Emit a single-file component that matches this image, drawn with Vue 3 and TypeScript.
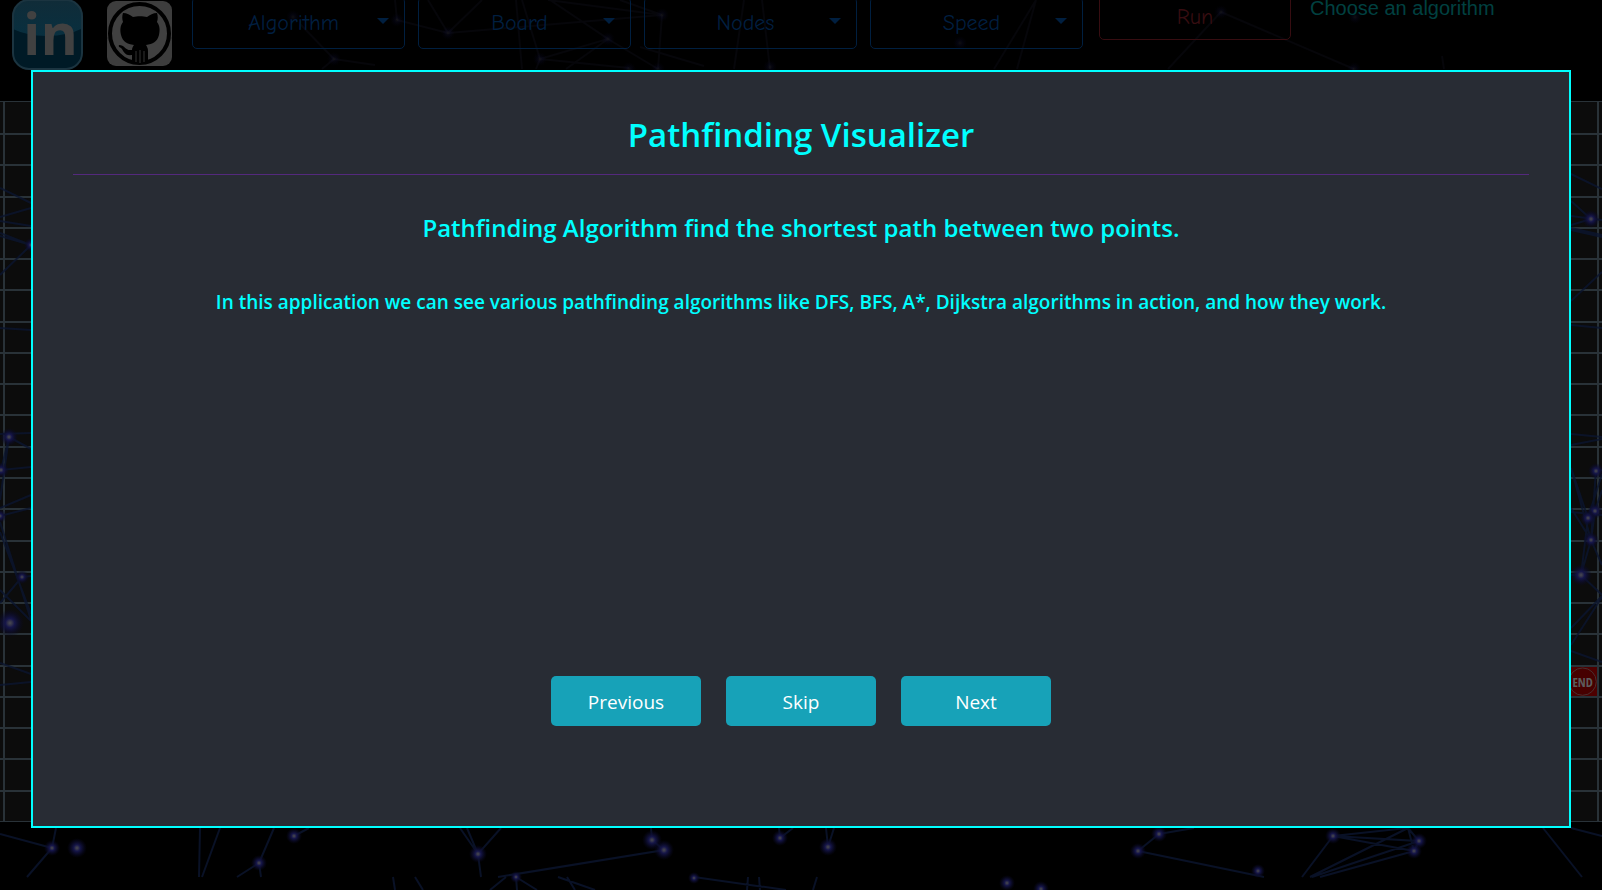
<script setup lang="ts">
interface Star {
  x: number
  y: number
  r: number
}

const menus: string[] = ['Algorithm', 'Board', 'Nodes', 'Speed']
const steps: string[] = ['Previous', 'Skip', 'Next']

const rows = 23
const columns = 53
const endCell = 18 * columns + 51
const cells: number[] = Array.from({ length: rows * columns }, (_, i) => i)

const faintStars: Star[] = [
  [293, 17], [397, 20], [334, 59], [448, 33], [608, 39], [540, 59], [662, 15],
  [770, 67], [629, 69], [658, 69], [960, 43], [1221, 12], [1354, 69], [1355, 17],
].map(([x, y]) => ({ x, y, r: 7 }))

const stars: Star[] = [
  [52, 848, 8], [77, 848, 10], [259, 863, 8], [294, 836, 8], [478, 854, 9],
  [652, 840, 10], [664, 850, 10], [780, 838, 8], [828, 847, 9], [1138, 851, 8],
  [1159, 834, 8], [1258, 871, 7], [1333, 836, 8], [1419, 841, 8], [1414, 851, 8],
  [1007, 883, 8], [1041, 889, 8], [694, 878, 6], [516, 877, 6],
  [9, 437, 9], [1, 470, 8], [0, 516, 7], [22, 577, 7], [10, 623, 14], [31, 245, 7],
  [1591, 219, 9], [1596, 471, 8], [1595, 511, 8], [1588, 518, 8], [1591, 540, 8], [1581, 575, 11],
].map(([x, y, r]) => ({ x, y, r }))

const faintLines =
  'M300 24L334 59L375 65M334 59L322 69M397 20L448 33L662 15L548 0M448 33L482 0M448 33L428 0' +
  'M397 20L395 0M516 0L522 69M522 0L540 59L608 39L550 0M540 59L536 69M540 59L629 68' +
  'M608 39L566 69M608 39L658 69M640 47L704 66M662 15L658 69M662 15L620 0M744 0L734 69' +
  'M762 0L770 69M1036 0L994 69M1036 0L1017 69M1221 12L1168 69M1221 12L1354 69M1442 56L1444 69'

const lines =
  'M0 834L52 848L56 828M52 848L27 877M200 828L199 877M220 828L202 877M274 828L259 863L237 877' +
  'M259 863L261 877M294 836L309 828M460 828L478 854L501 828M467 828L478 854L481 877' +
  'M651 828L652 840L664 850L498 877M779 828L780 838L793 828M826 828L828 847L834 828' +
  'M1138 851L1159 834L1194 828M1138 851L1264 877M1333 836L1302 877M1333 836L1407 828' +
  'M1333 836L1419 841L1408 828M1333 836L1414 851L1320 877M1419 841L1414 851L1408 828' +
  'M1408 828L1310 877M1419 841L1312 877M1543 828L1582 877M1571 828L1602 836' +
  'M393 877L395 890M415 877L423 890M506 877L490 890M516 877L537 890M516 877L517 890' +
  'M558 877L595 890M567 877L575 890M694 877L786 890M748 877L747 890M759 877L760 890M817 877L813 890'

const sideLines =
  'M0 188L31 203M0 217L31 208M0 221L31 226M0 233L31 245L0 275M0 236L31 245M0 328L31 330' +
  'M0 434L31 433M9 437L31 449M9 437L1 470L31 467M9 437L0 500M0 508L31 495M0 516L31 508' +
  'M0 522L31 620M0 532L31 614M0 590L31 621M0 603L22 577L31 576M0 663L31 674M0 685L31 682' +
  'M1571 174L1602 189M1571 201L1591 219L1571 225M1571 216L1602 220M1571 230L1602 237' +
  'M1571 228L1602 235M1571 301L1602 272M1571 325L1602 328M1571 434L1602 437M1571 445L1602 439' +
  'M1596 471L1602 470M1571 468L1591 540L1602 565M1571 508L1591 540L1596 470' +
  'M1571 512L1602 515M1588 518L1602 474M1588 518L1571 468M1588 518L1595 511L1602 490' +
  'M1591 540L1595 511M1591 540L1581 575L1602 595M1581 575L1588 518M1581 575L1571 575' +
  'M1571 628L1602 596M1571 645L1602 597M1571 651L1602 662'
</script>

<template>
  <div class="page">
    <svg class="sky" viewBox="0 0 1602 890" preserveAspectRatio="xMidYMin slice" aria-hidden="true">
      <defs>
        <radialGradient id="glow">
          <stop offset="0" stop-color="#4a4a50" />
          <stop offset="0.15" stop-color="#34344c" />
          <stop offset="0.32" stop-color="#16164a" />
          <stop offset="0.6" stop-color="#0e0e34" stop-opacity="0.7" />
          <stop offset="1" stop-color="#080820" stop-opacity="0" />
        </radialGradient>
      </defs>
      <path :d="faintLines" class="line faint" />
      <path :d="lines" class="line" />
      <circle v-for="(s, i) in faintStars" :key="'f' + i" :cx="s.x" :cy="s.y" :r="s.r" fill="url(#glow)" opacity="0.2" />
    </svg>

    <header class="toolbar">
      <a class="linkedin" href="#linkedin" aria-label="LinkedIn">
        <svg width="72" height="72" viewBox="0 0 72 72">
          <defs>
            <clipPath id="badge"><rect x="1" y="1" width="69" height="69" rx="16" /></clipPath>
            <linearGradient id="shine" x1="0" y1="0" x2="0" y2="1">
              <stop offset="0" stop-color="#152a34" />
              <stop offset="1" stop-color="#082f3f" />
            </linearGradient>
          </defs>
          <rect x="1" y="1" width="69" height="69" rx="16" fill="#001a26" />
          <ellipse cx="35" cy="8" rx="52" ry="29" fill="url(#shine)" clip-path="url(#badge)" />
          <rect x="1" y="1" width="69" height="69" rx="16" fill="none" stroke="#1b3440" stroke-width="2" />
          <text x="11" y="56" class="in">in</text>
        </svg>
      </a>
      <a class="github" href="#github" aria-label="GitHub">
        <svg width="65" height="65" viewBox="0 0 65 65">
          <rect width="65" height="65" rx="9" fill="#3d3d3d" />
          <path d="M0 37H65" stroke="#303030" />
          <circle cx="32.500" cy="32.500" r="29.500" fill="#404040" stroke="#000" stroke-width="4" />
          <path
            fill="#000"
            d="M16 12c4 0 7 2 10 4 4-1 10-1 14 0 3-2 6-4 10-4 1 3 1 6 0 9 3 4 3 8 2 13-2 7-6 9-13 10 1 2 2 3 2 6v10c-5 2-11 2-16 0v-6c-8 1-8-4-11-7-1-1-3-1-2-3 6 0 6 6 13 5 0-2 1-4 2-5-7-1-11-3-13-10-1-5-1-9 2-13-1-3-1-6 0-9z"
          />
          <path d="M29 50v11M33 49v13M37 50v11" stroke="#333" stroke-width="1" />
        </svg>
      </a>
      <nav class="menus">
        <button v-for="menu in menus" :key="menu" type="button" class="menu">
          <span class="name">{{ menu }}</span>
          <span class="caret"></span>
        </button>
      </nav>
      <button type="button" class="run">Run</button>
      <p class="hint">Choose an algorithm</p>
    </header>

    <main class="board">
      <div class="cells">
        <div v-for="cell in cells" :key="cell" class="cell">
          <svg v-if="cell === endCell" class="end" viewBox="0 0 30 30" role="img" aria-label="End">
            <rect width="30" height="30" fill="#4d0000" />
            <circle cx="15" cy="15" r="14" fill="#460000" stroke="#493030" stroke-width="1" />
            <text x="15" y="20" text-anchor="middle">END</text>
          </svg>
        </div>
      </div>
    </main>

    <svg class="sky" viewBox="0 0 1602 890" preserveAspectRatio="xMidYMin slice" aria-hidden="true">
      <path :d="sideLines" class="line" />
      <circle v-for="(s, i) in stars" :key="i" :cx="s.x" :cy="s.y" :r="s.r" fill="url(#glow)" />
    </svg>

    <div class="overlay">
      <section class="dialog" role="dialog" aria-modal="true" aria-labelledby="dialog-title">
        <h1 id="dialog-title">Pathfinding Visualizer</h1>
        <hr />
        <h2>Pathfinding Algorithm find the shortest path between two points.</h2>
        <h3>
          In this application we can see various pathfinding algorithms like DFS, BFS, A*, Dijkstra algorithms in
          action, and how they work.
        </h3>
        <div class="actions">
          <button v-for="step in steps" :key="step" type="button">{{ step }}</button>
        </div>
      </section>
    </div>
  </div>
</template>

<style>
body {
  margin: 0;
  background: #000;
}
</style>

<style scoped>
* {
  box-sizing: border-box;
}

.page {
  position: relative;
  min-height: 100vh;
  overflow: hidden;
  background: #000;
  font-family: 'Segoe UI', 'Open Sans', 'Noto Sans', sans-serif;
}

.sky {
  position: absolute;
  inset: 0;
  width: 100%;
  height: 100%;
  pointer-events: none;
}

.line {
  fill: none;
  stroke: #0b1530;
  stroke-width: 2;
  stroke-opacity: 0.8;
}

.faint {
  stroke: #07070d;
}

.toolbar {
  position: relative;
  display: flex;
  align-items: flex-start;
  height: 107px;
  margin-top: -6px;
  padding-left: 12px;
}

.toolbar svg {
  display: block;
}

.linkedin {
  margin-top: 5px;
}

.in {
  font: 700 57px 'Open Sans', sans-serif;
  fill: #414141;
}

.github {
  margin: 7px 20px 0 23px;
}

.menus {
  display: flex;
  gap: 13px;
  margin-top: 3px;
}

.menu,
.run {
  border: 1px solid #001f40;
  border-radius: 5px;
  background: transparent;
  color: #001f40;
  font: 500 22px 'Comic Sans MS', 'Comic Neue', 'Open Sans', sans-serif;
}

.menu {
  display: flex;
  align-items: center;
  width: 213px;
  height: 52px;
  padding: 0 15px 0 17px;
}

.name {
  flex: 1;
}

.caret {
  margin-bottom: 4px;
  border: 6px solid transparent;
  border-top-color: #001f40;
  border-bottom: 0;
}

.run {
  width: 192px;
  height: 46px;
  margin-left: 16px;
  border-color: #370d11;
  color: #370d11;
}

.hint {
  margin: 2px 0 0 19px;
  color: #004040;
  font: 20px/24px 'Liberation Sans', Arial, sans-serif;
  white-space: nowrap;
}

.board {
  position: relative;
  overflow: hidden;
}

.cells {
  display: grid;
  grid-template-columns: repeat(53, 1fr);
  grid-template-rows: 33px repeat(22, 1fr);
  height: 721px;
  margin: 0 -27px;
}

.cell {
  min-width: 0;
  min-height: 0;
  border: 1px solid #293238;
  background: #0c0c0c;
}

.end {
  display: block;
  width: 100%;
  height: 100%;
}

.end text {
  fill: #5c5c5c;
  font: 700 13px 'Liberation Sans Narrow', 'Open Sans Condensed', 'DejaVu Sans Condensed', sans-serif;
}

.overlay {
  position: fixed;
  inset: 0;
  padding: 70px 31px 62px;
}

.dialog {
  display: flex;
  flex-direction: column;
  height: 100%;
  padding: 38px 40px 100px;
  border: 2px solid #00ffff;
  background: #282c34;
  color: #00ffff;
  text-align: center;
}

h1,
h2,
h3 {
  margin: 0;
  font-weight: 600;
}

h1 {
  font-size: 33px;
  line-height: 50px;
}

hr {
  width: 100%;
  height: 1px;
  margin: 14px 0 35px;
  border: 0;
  background: #54297d;
}

h2 {
  font-size: 24px;
  line-height: 36px;
}

h3 {
  margin-top: 40px;
  font-size: 19px;
  line-height: 32px;
}

.actions {
  display: flex;
  justify-content: center;
  gap: 25px;
  margin-top: auto;
}

.actions button {
  width: 150px;
  height: 50px;
  padding-top: 3px;
  border: 0;
  border-radius: 5px;
  background: #17a2b8;
  color: #fff;
  font: 19px 'Segoe UI', 'Open Sans', 'Noto Sans', sans-serif;
}
</style>
